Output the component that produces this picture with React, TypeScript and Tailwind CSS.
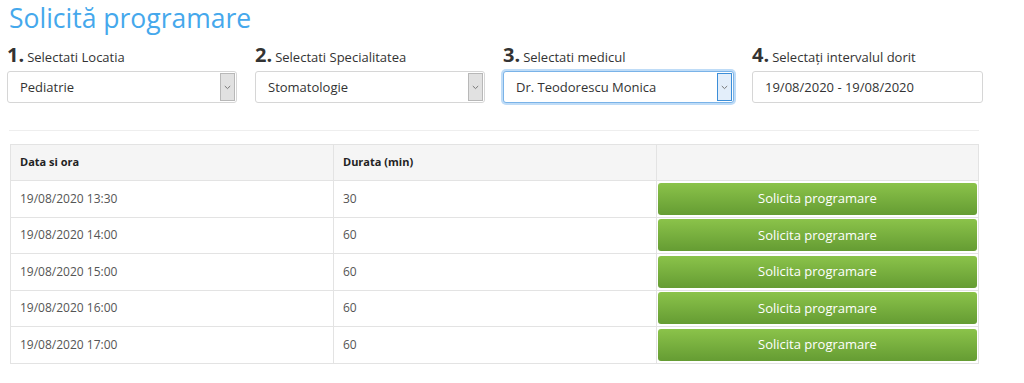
import React from "react";

const Arrow = ({ focused }: { focused?: boolean }) => (
  <div
    className={
      "flex h-[28px] w-[15px] items-center justify-center border " +
      (focused ? "border-[#3c8ed8] bg-[#e3eefa]" : "border-[#b8b8b8] bg-[#e1e1e1]")
    }
  >
    <svg width="7" height="5" viewBox="0 0 7 5">
      <path d="M0.8 1 L3.5 3.6 L6.2 1" fill="none" stroke="#777" strokeWidth="1" />
    </svg>
  </div>
);

const Field = ({
  num,
  label,
  value,
  select,
  focused,
  w,
}: {
  num: string;
  label: string;
  value: string;
  select?: boolean;
  focused?: boolean;
  w: string;
}) => (
  <div className={"flex flex-col " + w}>
    <div className="flex h-[22px] items-end text-[#333]">
      <span className="text-[20px] font-bold leading-[20px]">{num}.</span>
      <span className="ml-[3px] text-[13px] leading-[16px]">{label}</span>
    </div>
    <div
      className={
        "mt-[6px] flex h-[32px] items-center justify-between rounded-[3px] border bg-white pr-[1px] " +
        (focused
          ? "border-[#7ab3e8] shadow-[0_0_0_2px_#bfdcf7]"
          : "border-[#d6d6d6]")
      }
    >
      <span className="pl-[12px] pt-[2px] text-[13px] text-[#333]">{value}</span>
      {select && <Arrow focused={focused} />}
    </div>
  </div>
);

const rows = [
  ["19/08/2020 13:30", "30"],
  ["19/08/2020 14:00", "60"],
  ["19/08/2020 15:00", "60"],
  ["19/08/2020 16:00", "60"],
  ["19/08/2020 17:00", "60"],
];

export default function App() {
  return (
    <div
      className="h-[383px] w-[1024px] overflow-hidden bg-white"
      style={{ fontFamily: '"Open Sans", "Noto Sans", sans-serif' }}
    >
      <h1 className="ml-[9px] pt-[2px] text-[26.5px] leading-[32px] text-[#45a8ec]">
        Solicită programare
      </h1>
      <div className="ml-[7px] mt-[9px] flex gap-[18px]">
        <Field w="w-[230px]" num="1" label="Selectati Locatia" value="Pediatrie" select />
        <Field w="w-[230px]" num="2" label="Selectati Specialitatea" value="Stomatologie" select />
        <Field w="w-[231px]" num="3" label="Selectati medicul" value="Dr. Teodorescu Monica" select focused />
        <Field w="w-[231px]" num="4" label="Selectați intervalul dorit" value="19/08/2020 - 19/08/2020" />
      </div>
      <div className="ml-[9px] mt-[27px] w-[970px] border-t border-[#eeeeee]" />
      <table className="ml-[10px] mt-[13px] w-[969px] table-fixed border-collapse text-[12px]">
        <thead>
          <tr className="h-[36px] bg-[#f5f5f5]">
            <th className="w-[323px] border border-[#e3e3e3] pl-[9px] text-left text-[11px] font-bold text-[#222]">
              Data si ora
            </th>
            <th className="w-[323px] border border-[#e3e3e3] pl-[9px] text-left text-[11px] font-bold text-[#222]">
              Durata (min)
            </th>
            <th className="border border-[#e3e3e3]" />
          </tr>
        </thead>
        <tbody>
          {rows.map(([d, m]) => (
            <tr key={d} className="h-[36.5px]">
              <td className="border border-[#e3e3e3] pl-[9px] text-[#555]">{d}</td>
              <td className="border border-[#e3e3e3] pl-[9px] text-[#555]">{m}</td>
              <td className="border border-[#e3e3e3] p-[1px]">
                <button className="flex h-[32px] w-full items-center justify-center rounded-[3px] bg-gradient-to-b from-[#8bc34a] to-[#659c33] text-[13px] text-white">
                  Solicita programare
                </button>
              </td>
            </tr>
          ))}
        </tbody>
      </table>
    </div>
  );
}
